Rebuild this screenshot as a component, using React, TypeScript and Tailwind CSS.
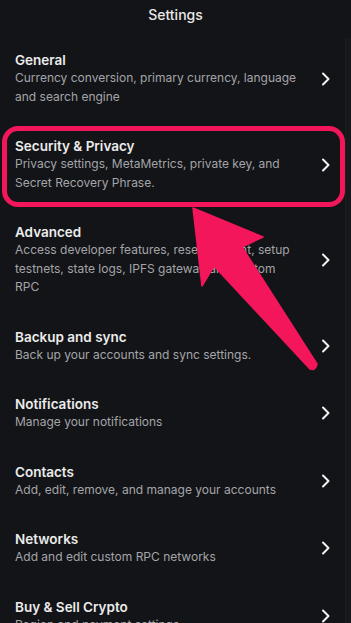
import React from 'react';

interface SettingItem {
    title: string;
    description: string;
    highlighted?: boolean;
}

const items: SettingItem[] = [
    { title: 'General', description: 'Currency conversion, primary currency, language and search engine' },
    { title: 'Security & Privacy', description: 'Privacy settings, MetaMetrics, private key, and Secret Recovery Phrase.', highlighted: true },
    { title: 'Advanced', description: 'Access developer features, reset account, setup testnets, state logs, IPFS gateway and custom RPC' },
    { title: 'Backup and sync', description: 'Back up your accounts and sync settings.' },
    { title: 'Notifications', description: 'Manage your notifications' },
    { title: 'Contacts', description: 'Add, edit, remove, and manage your accounts' },
    { title: 'Networks', description: 'Add and edit custom RPC networks' },
    { title: 'Buy & Sell Crypto', description: 'Region and payment settings' },
];

const Chevron = () => (
    <svg width="10" height="14" viewBox="0 0 10 14" fill="none" className="shrink-0">
        <path d="M2 1.5L7.5 7L2 12.5" stroke="#f2f2f2" strokeWidth={2} strokeLinecap="round" strokeLinejoin="round" />
    </svg>
);

const SettingRow: React.FC<{ item: SettingItem }> = ({ item }) => (
    <div className="relative flex items-center pl-[15px] pr-[20px] pt-[16px] pb-[15px]">
        {/* Annotation box around the highlighted row */}
        {item.highlighted && (
            <div className="absolute left-[2px] right-[6px] top-[5px] bottom-0 rounded-[16px] border-[5px] border-[#f4165b] pointer-events-none" />
        )}
        <div className="flex-1 min-w-0 pr-[22px]">
            <p className="text-[13.5px] leading-[18px] font-semibold text-[#ececec]">{item.title}</p>
            <p className="text-[12px] leading-[18.5px] text-[#a3a5a9]">{item.description}</p>
        </div>
        <Chevron />
    </div>
);

export default function App() {
    return (
        <div
            className="relative w-[351px] h-[623px] overflow-hidden bg-[#131417]"
            style={{ fontFamily: 'Inter, "Noto Sans", sans-serif' }}
        >
            {/* scrollbar track */}
            <div className="absolute right-0 top-[38px] bottom-0 w-[6px] bg-[#17181b] border-l border-[#1d1e21]" />

            <div className="h-[35px] flex items-start justify-center pt-[6px]">
                <h1 className="text-[14px] leading-[18px] font-medium text-[#e8e8e8]">Settings</h1>
            </div>

            <div className="flex flex-col">
                {items.map(item => (
                    <SettingRow key={item.title} item={item} />
                ))}
            </div>

            {/* Pointer arrow */}
            <svg className="absolute left-0 top-0 pointer-events-none" width="351" height="623" viewBox="0 0 351 623">
                <path
                    d="M193 208 L263 237 L242 247 L317 364 Q316 371 310 369 L214 266 L202 286 Z"
                    fill="#f4165b"
                    stroke="#f4165b"
                    strokeWidth={1.5}
                    strokeLinejoin="round"
                />
            </svg>
        </div>
    );
}
